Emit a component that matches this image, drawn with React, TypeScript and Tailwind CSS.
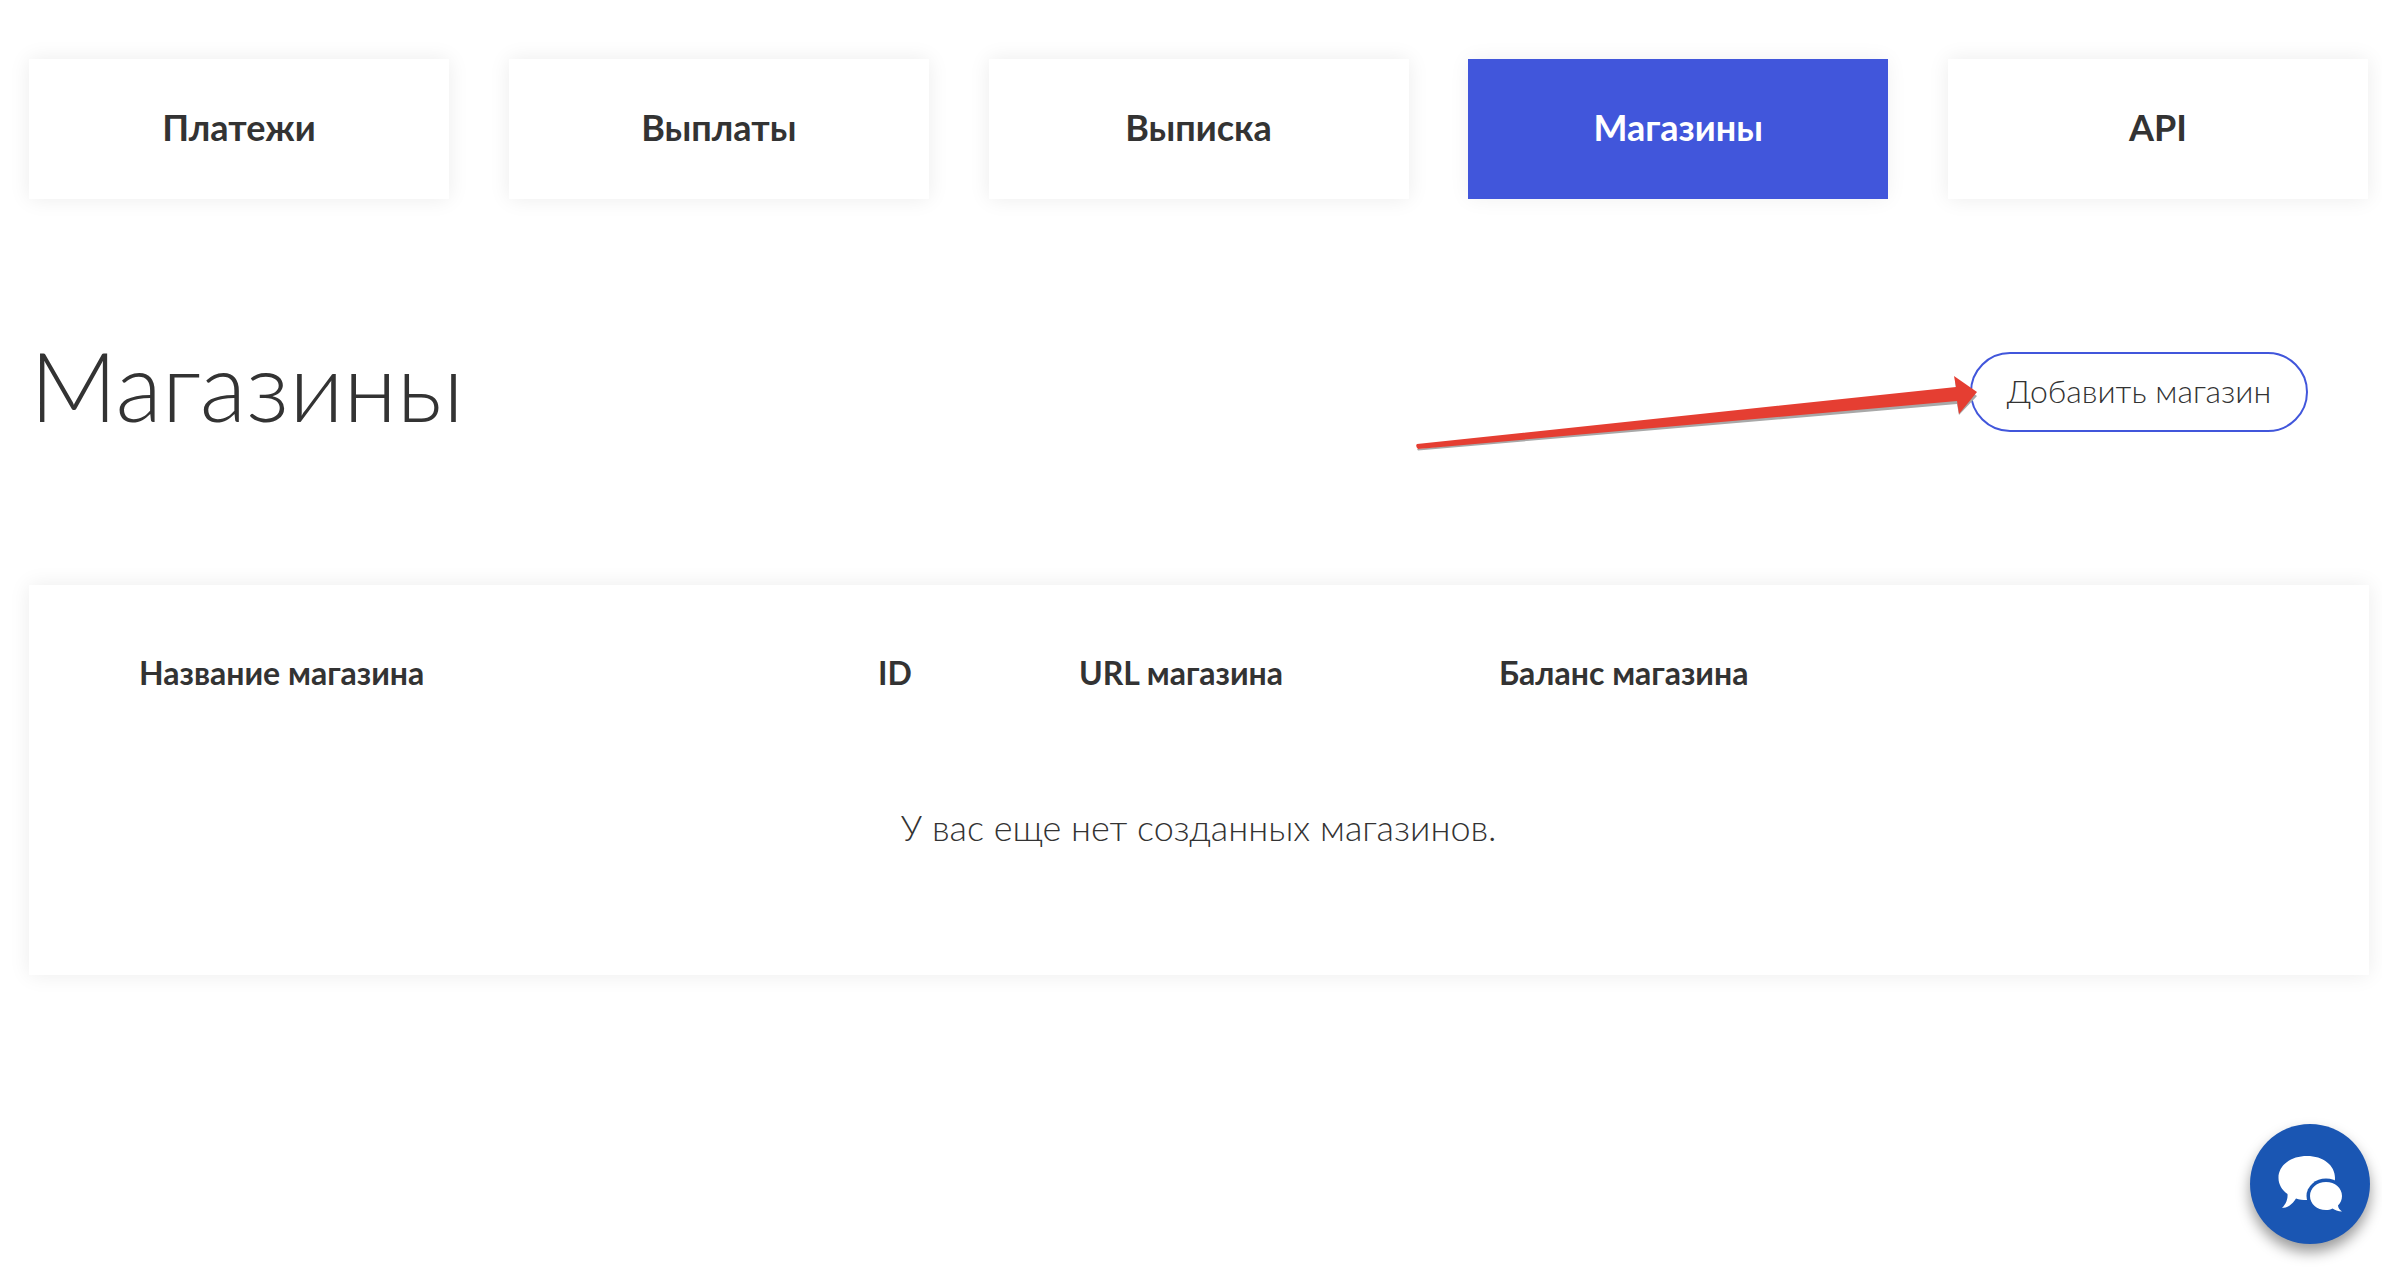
const tabs = ['Платежи', 'Выплаты', 'Выписка', 'Магазины', 'API']

const columns = [
  { title: 'Название магазина', width: 'w-[739px]' },
  { title: 'ID', width: 'w-[201px]' },
  { title: 'URL магазина', width: 'w-[420px]' },
  { title: 'Баланс магазина', width: '' },
]

function Arrow() {
  return (
    <svg className="absolute left-0 top-0 pointer-events-none" width="2382" height="600">
      <path d="M1418 450.500 L1957 404 L1959 415 L1977 396 L1955 380 L1956 391 L1417 449 Z" fill="#a8a8a8" />
      <path d="M1417 444 L1956 387 L1954 376 L1977 392 L1959 414 L1957 401 L1418 449 Q1415 446 1417 444 Z" fill="#e53e32" />
    </svg>
  )
}

function ChatButton() {
  return (
    <button className="fixed left-[2250px] top-[1124px] w-[120px] h-[120px] rounded-full bg-[#1a56b3] shadow-[0_8px_14px_rgba(0,0,0,0.4)]">
      <svg viewBox="0 0 120 120" className="w-[120px] h-[120px]">
        <path d="M57 32 C73 32 85 41 85 54 C85 67 73 76 57 76 C53 76 49 75.500 46 74.500 C42 81 37 84 32 84 C36 80 38 75 37.500 70 C32 66 28.500 60.500 28.500 54 C28.500 41 41 32 57 32 Z" fill="white" />
        <ellipse cx="76" cy="72" rx="19.500" ry="17.500" fill="#1a56b3" />
        <path d="M76 58 C85 58 92 64 92 72 C92 76 90.500 79 88 81.500 C88 84 90 86 92 87.500 C88 87.500 84.500 86 82.500 84.500 C80.500 85.500 78.500 86 76 86 C67 86 60 80 60 72 C60 64 67 58 76 58 Z" fill="white" />
      </svg>
    </button>
  )
}

export default function App() {
  return (
    <div className="relative min-h-[1268px] bg-white pl-[29px] pr-[13px] pt-[59px] text-[#333333] font-['Lato','Noto_Sans',sans-serif]">
      <nav className="flex gap-[59.75px]">
        {tabs.map((tab) => (
          <a
            key={tab}
            className={
              tab === 'Магазины'
                ? 'flex h-[140px] w-[420px] items-center justify-center bg-[#4156db] pb-[5px] text-[36px] font-bold text-white shadow-[0_0_20px_rgba(0,0,0,0.06)]'
                : 'flex h-[140px] w-[420px] items-center justify-center bg-white pb-[5px] text-[36px] font-bold shadow-[0_0_20px_rgba(0,0,0,0.08)]'
            }
          >
            {tab}
          </a>
        ))}
      </nav>

      <div className="mt-[153px] flex h-[80px] items-center justify-between pl-[1px] pr-[61px]">
        <h1 className="pb-[14px] text-[96px] font-light leading-none">Магазины</h1>
        <button className="h-[80px] w-[338px] rounded-full border-2 border-[#4156db] bg-white pb-[2px] text-[32px] font-light text-[#333333]">
          Добавить магазин
        </button>
      </div>

      <section className="mt-[153px] h-[390px] bg-white pl-[110px] pr-[111px] pt-[66px] shadow-[0_0_20px_rgba(0,0,0,0.08)]">
        <div className="flex text-[32px] font-bold leading-[44px]">
          {columns.map((col) => (
            <div key={col.title} className={col.width}>
              {col.title}
            </div>
          ))}
        </div>
        <p className="mt-[110px] text-center text-[36px] font-light leading-[44px]">
          У вас еще нет созданных магазинов.
        </p>
      </section>

      <Arrow />
      <ChatButton />
    </div>
  )
}
